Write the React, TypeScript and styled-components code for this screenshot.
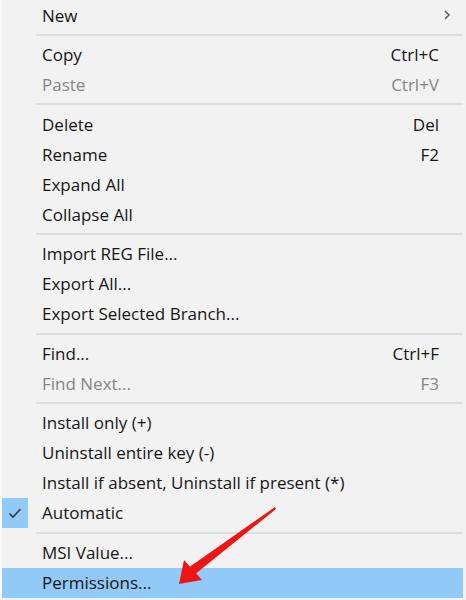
import React from 'react';
import styled, { createGlobalStyle } from 'styled-components';

const GlobalStyle = createGlobalStyle`
  html, body {
    margin: 0;
    padding: 0;
    background: #f2f2f2;
  }
`;

const Menu = styled.div`
  position: relative;
  width: 466px;
  height: 600px;
  display: flex;
  flex-direction: column;
  background: #f2f2f2;
  border-left: 2px solid #f8f8f8;
  box-sizing: border-box;
  font-family: 'Open Sans', 'Noto Sans', sans-serif;
  font-size: 17px;
  overflow: hidden;
`;

const Row = styled.div<{ $disabled?: boolean; $active?: boolean }>`
  display: flex;
  align-items: center;
  height: 30px;
  flex-shrink: 0;
  margin-right: 3px;
  background: ${p => (p.$active ? '#91c9f7' : 'transparent')};
  color: ${p => (p.$disabled ? '#858585' : '#161616')};
`;

const CheckBox = styled.div<{ $on?: boolean }>`
  width: 26px;
  height: 30px;
  margin-right: 14px;
  display: flex;
  align-items: center;
  justify-content: center;
  background: ${p => (p.$on ? '#91c9f7' : 'transparent')};
`;

const Label = styled.span`
  flex: 1;
`;

const Shortcut = styled.span`
  padding-right: 24px;
`;

const Chevron = styled.span`
  padding-right: 12px;
  display: flex;
  align-items: center;
`;

const Separator = styled.div`
  height: 9.6px;
  flex-shrink: 0;
  display: flex;
  align-items: center;
  padding-left: 34px;
  margin-right: 3px;

  &::after {
    content: '';
    flex: 1;
    height: 2px;
    background: #dedede;
  }
`;

const Arrow = styled.svg`
  position: absolute;
  left: 0;
  top: 0;
  pointer-events: none;
`;

type Item =
  | { sep: true }
  | { label: string; shortcut?: string; disabled?: boolean; sub?: boolean; checked?: boolean; active?: boolean };

const items: Item[] = [
  { label: 'New', sub: true },
  { sep: true },
  { label: 'Copy', shortcut: 'Ctrl+C' },
  { label: 'Paste', shortcut: 'Ctrl+V', disabled: true },
  { sep: true },
  { label: 'Delete', shortcut: 'Del' },
  { label: 'Rename', shortcut: 'F2' },
  { label: 'Expand All' },
  { label: 'Collapse All' },
  { sep: true },
  { label: 'Import REG File...' },
  { label: 'Export All...' },
  { label: 'Export Selected Branch...' },
  { sep: true },
  { label: 'Find...', shortcut: 'Ctrl+F' },
  { label: 'Find Next...', shortcut: 'F3', disabled: true },
  { sep: true },
  { label: 'Install only (+)' },
  { label: 'Uninstall entire key (-)' },
  { label: 'Install if absent, Uninstall if present (*)' },
  { label: 'Automatic', checked: true },
  { sep: true },
  { label: 'MSI Value...' },
  { label: 'Permissions...', active: true },
];

const App: React.FC = () => {
  return (
    <>
      <GlobalStyle />
      <Menu>
        {items.map((it, i) =>
          'sep' in it ? (
            <Separator key={i} />
          ) : (
            <Row key={i} $disabled={it.disabled} $active={it.active}>
              <CheckBox $on={it.checked}>
                {it.checked && (
                  <svg width="14" height="12" viewBox="0 0 14 12">
                    <path d="M1.5 6.5 L5 10 L12.5 2" fill="none" stroke="#3a3a3a" strokeWidth="1.6" />
                  </svg>
                )}
              </CheckBox>
              <Label>{it.label}</Label>
              {it.shortcut && <Shortcut>{it.shortcut}</Shortcut>}
              {it.sub && (
                <Chevron>
                  <svg width="8" height="12" viewBox="0 0 8 12">
                    <path d="M2 2 L6 6 L2 10" fill="none" stroke="#555" strokeWidth="1.4" />
                  </svg>
                </Chevron>
              )}
            </Row>
          )
        )}
        <Arrow width="466" height="600" viewBox="0 0 466 600">
          <polygon points="273,507 274,509 192,575 186,568" fill="#f01515" />
          <polygon points="177,584 182,560 200,580" fill="#f01515" />
        </Arrow>
      </Menu>
    </>
  );
};

export default App;
